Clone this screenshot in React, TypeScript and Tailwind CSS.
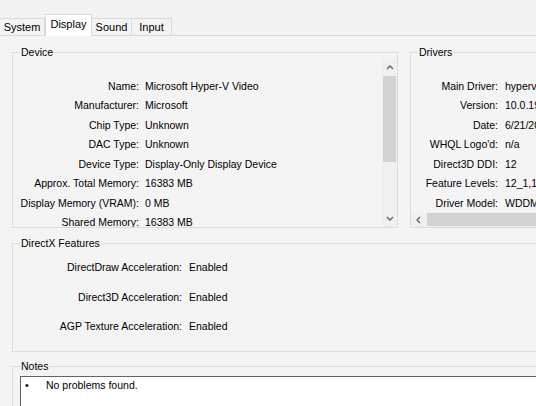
import type { ReactNode } from "react";

const deviceRows: [string, string][] = [
  ["Name:", "Microsoft Hyper-V Video"],
  ["Manufacturer:", "Microsoft"],
  ["Chip Type:", "Unknown"],
  ["DAC Type:", "Unknown"],
  ["Device Type:", "Display-Only Display Device"],
  ["Approx. Total Memory:", "16383 MB"],
  ["Display Memory (VRAM):", "0 MB"],
  ["Shared Memory:", "16383 MB"],
];

const driverRows: [string, string][] = [
  ["Main Driver:", "hypervideo.sys"],
  ["Version:", "10.0.19041.1"],
  ["Date:", "6/21/2006 12:00:00 AM"],
  ["WHQL Logo'd:", "n/a"],
  ["Direct3D DDI:", "12"],
  ["Feature Levels:", "12_1,12_0,11_1,11_0"],
  ["Driver Model:", "WDDM 1.3"],
];

const featureRows: [string, string][] = [
  ["DirectDraw Acceleration:", "Enabled"],
  ["Direct3D Acceleration:", "Enabled"],
  ["AGP Texture Acceleration:", "Enabled"],
];

const tabs = ["System", "Display", "Sound", "Input"];
const tabWidths: Record<string, string> = {
  System: "w-[45px]",
  Display: "w-[47px]",
  Sound: "w-[41px]",
  Input: "w-[41px]",
};

function GroupBox({
  title,
  className,
  children,
}: {
  title: string;
  className: string;
  children: ReactNode;
}) {
  return (
    <fieldset className={`shrink-0 border border-[#dcdcdc] ${className}`}>
      <legend className="ml-[7px] px-[1px] leading-[13px]">{title}</legend>
      {children}
    </fieldset>
  );
}

function Chevron({ dir }: { dir: "up" | "down" | "left" }) {
  const points = {
    up: "1,5 4,2 7,5",
    down: "1,2 4,5 7,2",
    left: "5,1 2,4 5,7",
  }[dir];
  return (
    <svg width="8" height="8" viewBox="0 0 8 8" className="block">
      <polyline points={points} fill="none" stroke="#606060" strokeWidth="1.3" />
    </svg>
  );
}

export default function App() {
  return (
    <div className="flex h-[406px] w-[536px] flex-col overflow-hidden bg-[#f3f3f3] font-['Liberation_Sans',Arial,sans-serif] text-[10.5px] text-black">
      {/* tab strip */}
      <div className="mt-[14px] flex h-[21px] items-end">
        {tabs.map((tab) => {
          const active = tab === "Display";
          return (
            <div
              key={tab}
              className={`${tabWidths[tab]} flex items-center justify-center border border-b-0 border-[#d9d9d9] text-[11px] ${
                active ? "relative z-10 -mb-px h-[22px] bg-white pb-[2px]" : "h-[17px] bg-[#f3f3f3]"
              } ${tab === "System" ? "border-l-0" : ""} ${tab === "Sound" ? "-ml-px" : ""} ${tab === "Input" ? "-ml-px" : ""}`}
            >
              {tab}
            </div>
          );
        })}
      </div>

      {/* tab page */}
      <div className="flex-1 border-t border-[#d9d9d9] bg-[#f5f4f5] pl-[12px]">
        <div className="mt-[10px] flex gap-[12px]">
          <GroupBox title="Device" className="h-[182px] w-[386px]">
            <div className="flex h-[168px]">
              <div className="flex-1 overflow-hidden pt-[18px]">
                {deviceRows.map(([label, value]) => (
                  <div key={label} className="flex h-[19.5px] items-center whitespace-nowrap">
                    <span className="w-[126px] text-right">{label}</span>
                    <span className="ml-[6px]">{value}</span>
                  </div>
                ))}
              </div>
              <div className="flex w-[15px] flex-col bg-[#f0f0f0]">
                <div className="flex h-[17px] items-center justify-center">
                  <Chevron dir="up" />
                </div>
                <div className="mx-[1px] h-[86px] bg-[#d2d2d2]" />
                <div className="flex-1" />
                <div className="flex h-[17px] items-center justify-center">
                  <Chevron dir="down" />
                </div>
              </div>
            </div>
          </GroupBox>

          <GroupBox title="Drivers" className="h-[182px] w-[200px]">
            <div className="flex h-[168px] flex-col">
              <div className="flex-1 overflow-hidden pt-[18px]">
                {driverRows.map(([label, value]) => (
                  <div key={label} className="flex h-[19.5px] items-center whitespace-nowrap">
                    <span className="w-[87px] shrink-0 text-right">{label}</span>
                    <span className="ml-[7px]">{value}</span>
                  </div>
                ))}
              </div>
              <div className="flex h-[15px] bg-[#f0f0f0]">
                <div className="flex w-[16px] items-center justify-center">
                  <Chevron dir="left" />
                </div>
                <div className="my-[1px] flex-1 bg-[#d2d2d2]" />
              </div>
            </div>
          </GroupBox>
        </div>

        <GroupBox title="DirectX Features" className="mt-[8.5px] h-[115.5px] w-[540px]">
          <div className="pt-[4px]">
            {featureRows.map(([label, value]) => (
              <div key={label} className="flex h-[29.5px] items-center whitespace-nowrap">
                <span className="w-[169px] text-right">{label}</span>
                <span className="ml-[7px]">{value}</span>
              </div>
            ))}
          </div>
        </GroupBox>

        <GroupBox title="Notes" className="mt-[7.5px] h-[60px] w-[540px]">
          <div className="ml-[7px] mt-[3.5px] h-[40px] border-l border-t border-[#646464] bg-white pt-[2px]">
            <div className="flex h-[13px] items-center leading-[13px]">
              <span className="ml-[4px] w-[21px]">•</span>
              <span>No problems found.</span>
            </div>
          </div>
        </GroupBox>
      </div>
    </div>
  );
}
